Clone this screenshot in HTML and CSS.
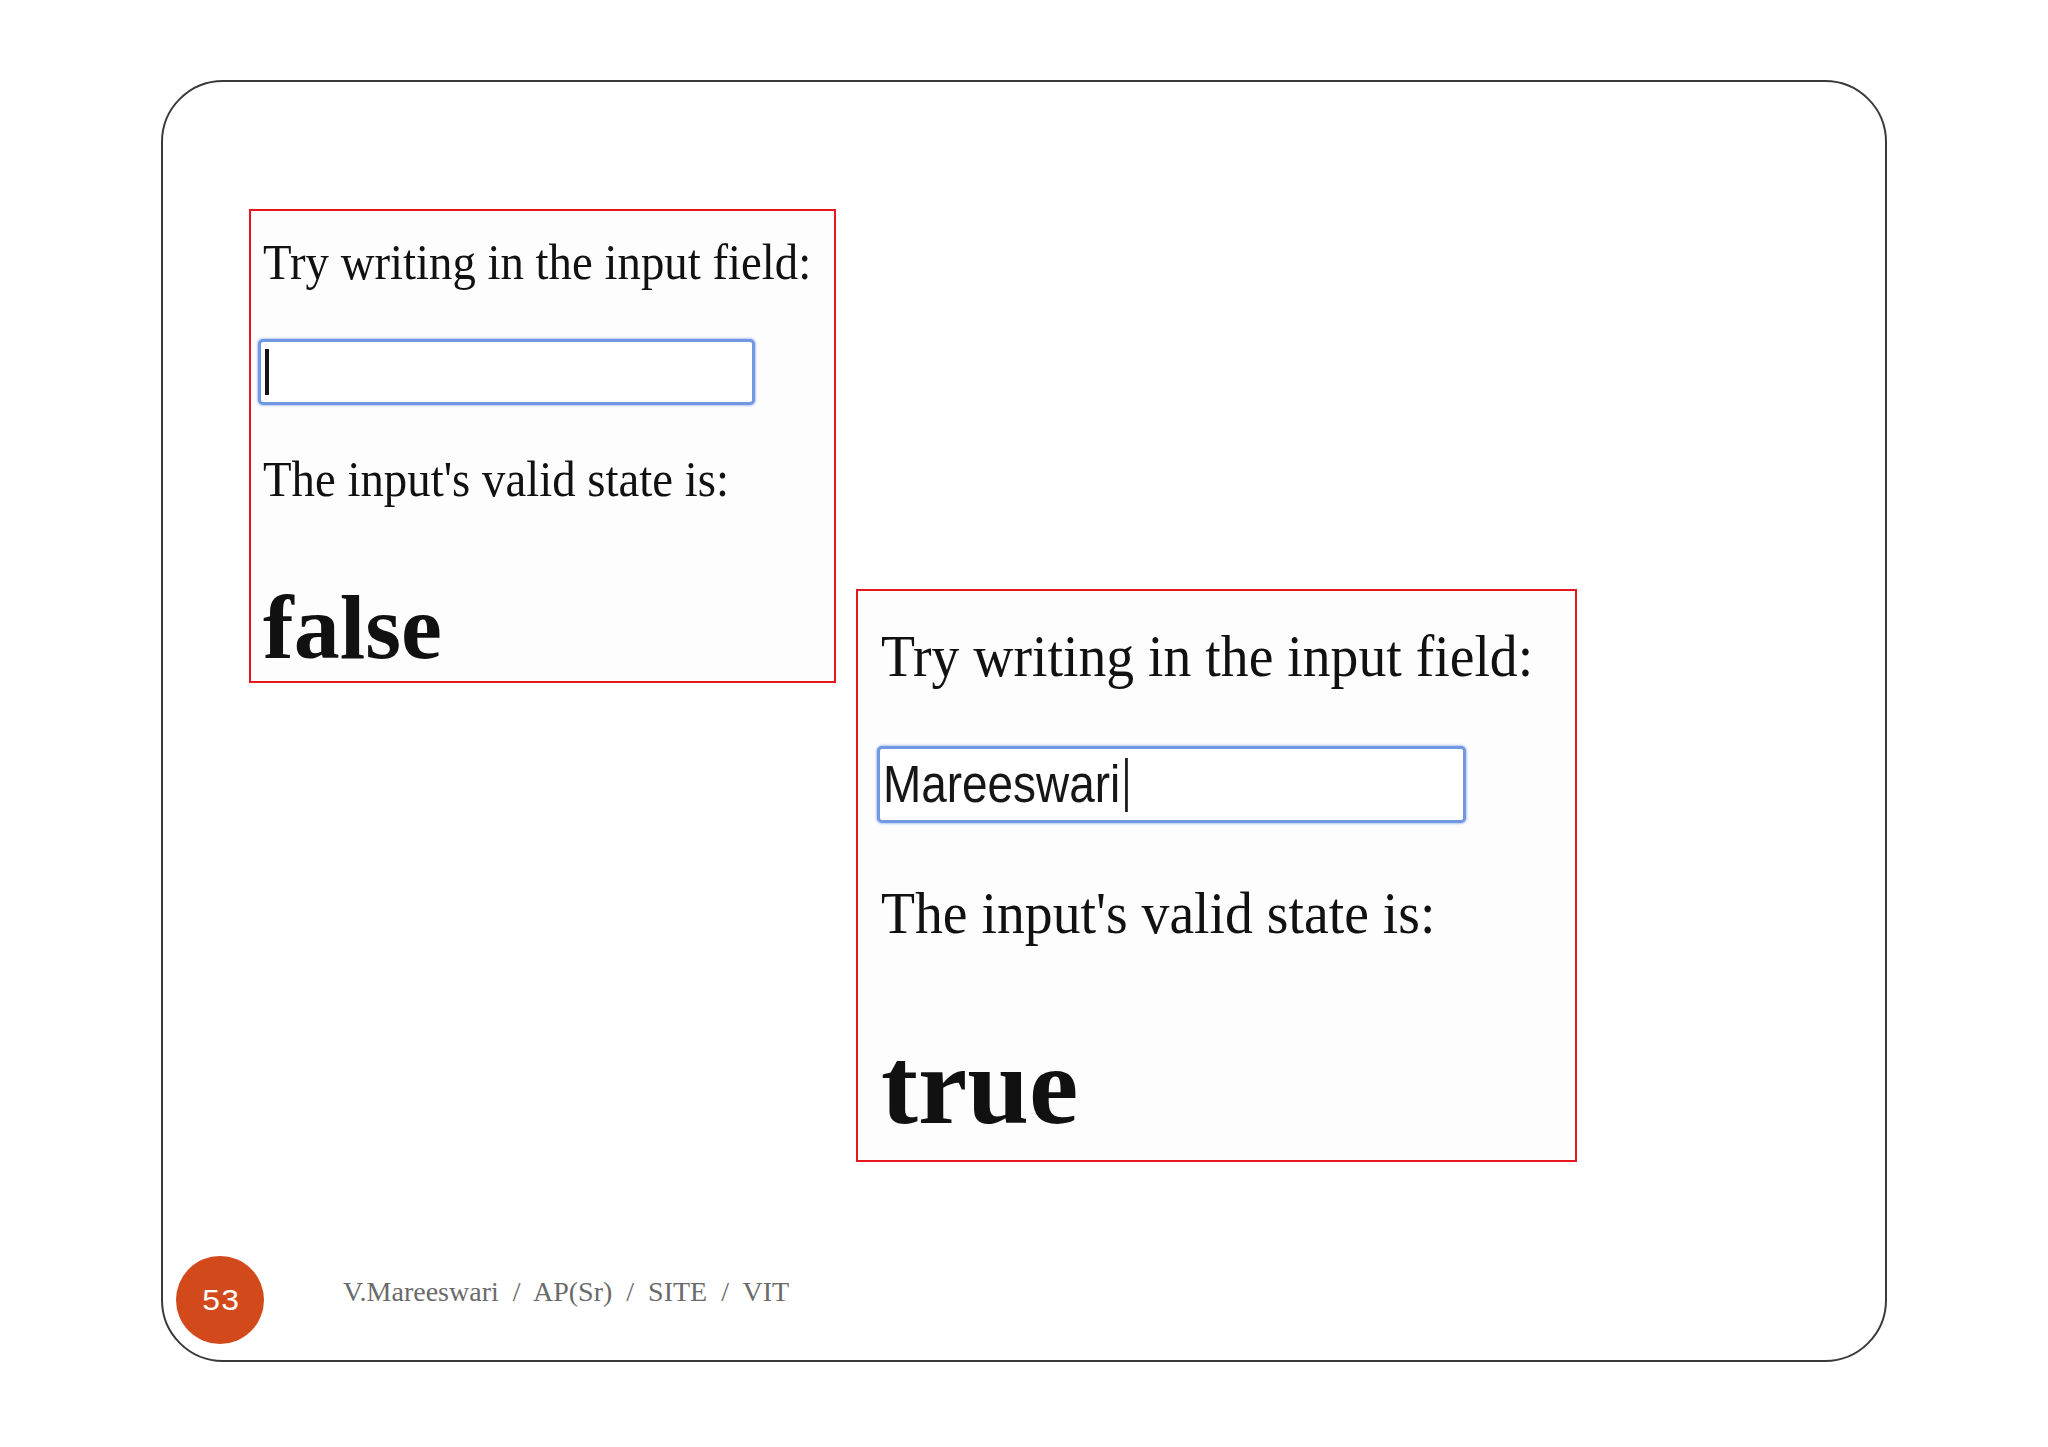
FILE: index.html
```html
<!DOCTYPE html>
<html lang="en">
<head>
<meta charset="utf-8">
<title>Slide 53 - input valid state</title>
<link rel="stylesheet" href="styles.css">
</head>
<body>
<div class="page">
  <div class="frame">
    <div class="slide-body">
      <div class="shot shot-small">
        <p class="line">Try writing in the input field:</p>
        <div class="field"><span class="caret"></span></div>
        <p class="line line-state">The input's valid state is:</p>
        <h1 class="state">false</h1>
      </div>
      <div class="shot shot-large">
        <p class="line">Try writing in the input field:</p>
        <div class="field"><span class="entry"><span class="value">Mareeswari</span><span class="caret"></span></span></div>
        <p class="line line-state">The input's valid state is:</p>
        <h1 class="state">true</h1>
      </div>
    </div>
    <div class="footer">
      <div class="slide-num"><span class="num">53</span></div>
      <div class="footer-text">V.Mareeswari  /  AP(Sr)  /  SITE  /  VIT</div>
    </div>
  </div>
</div>
</body>
</html>
```
FILE: styles.css
```css
html, body {
  margin: 0;
  padding: 0;
  background: #ffffff;
}

body {
  font-family: "Liberation Serif", "Times New Roman", serif;
  color: #111111;
}

.page {
  width: 2048px;
  height: 1447px;
  overflow: hidden;
}

.frame {
  margin: 80px 0 0 161px;
  width: 1726px;
  height: 1282px;
  box-sizing: border-box;
  border: 2px solid #3a3a3a;
  border-radius: 62px;
  display: flex;
  flex-direction: column;
}

.slide-body {
  display: flex;
  align-items: flex-start;
  padding-left: 86px;
}

.shot {
  box-sizing: border-box;
  border: 2px solid #e5181f;
  background: #fdfdfd;
  display: flex;
  flex-direction: column;
  align-items: flex-start;
}

.line {
  margin: 0;
  font-weight: normal;
  white-space: nowrap;
  transform-origin: left center;
}

.state {
  margin: 0;
  font-weight: bold;
  white-space: nowrap;
}

.field {
  box-sizing: border-box;
  border: 3px solid #7198e0;
  border-radius: 5px;
  box-shadow: 0 0 2px 1px rgba(120, 160, 232, 0.55);
  background: #ffffff;
  display: flex;
  align-items: center;
}

.caret {
  display: inline-block;
  background: #161616;
}

/* left, smaller screenshot */
.shot-small {
  width: 587px;
  height: 474px;
  margin-top: 127px;
  padding: 23px 0 4px 12px;
}

.shot-small .line {
  font-size: 50px;
  line-height: 56px;
  transform: scaleX(0.936);
}

.shot-small .field {
  margin-top: 49px;
  margin-left: -5px;
  width: 497px;
  height: 66px;
  padding-left: 4px;
}

.shot-small .caret {
  width: 4px;
  height: 46px;
}

.shot-small .line-state {
  margin-top: 46px;
}

.shot-small .state {
  margin-top: 70px;
  font-size: 92px;
  line-height: 100px;
}

/* right, larger screenshot */
.shot-large {
  width: 721px;
  height: 573px;
  margin-top: 507px;
  margin-left: 20px;
  padding: 32px 0 14px 23px;
}

.shot-large .line {
  font-size: 60px;
  line-height: 66px;
  transform: scaleX(0.928);
}

.shot-large .field {
  margin-top: 57px;
  margin-left: -4px;
  width: 589px;
  height: 77px;
  padding-left: 3px;
}

.shot-large .entry {
  display: flex;
  align-items: center;
  transform: scaleX(0.9);
  transform-origin: left center;
}

.shot-large .value {
  font-family: "Liberation Sans", Arial, sans-serif;
  font-size: 51px;
  line-height: 56px;
  color: #161616;
}

.shot-large .caret {
  width: 3px;
  height: 54px;
  margin-left: 5px;
}

.shot-large .line-state {
  margin-top: 57px;
}

.shot-large .state {
  margin-top: 80px;
  font-size: 111px;
  line-height: 120px;
}

/* footer */
.footer {
  margin-top: auto;
  margin-bottom: 16px;
  padding-left: 13px;
  display: flex;
  align-items: center;
}

.slide-num {
  width: 88px;
  height: 88px;
  border-radius: 50%;
  background: #d24a1c;
  color: #ffffff;
  font-family: "Liberation Sans", Arial, sans-serif;
  display: flex;
  align-items: center;
  justify-content: center;
  padding-left: 2px;
  box-sizing: border-box;
}

.num {
  display: inline-block;
  font-size: 29px;
  line-height: 32px;
  letter-spacing: 1px;
  transform: scaleX(1.1);
}

.footer-text {
  margin-left: 79px;
  margin-bottom: 17px;
  font-family: "Liberation Serif", "Times New Roman", serif;
  font-size: 28px;
  line-height: 32px;
  color: #6a6a6a;
  white-space: pre;
}
```
